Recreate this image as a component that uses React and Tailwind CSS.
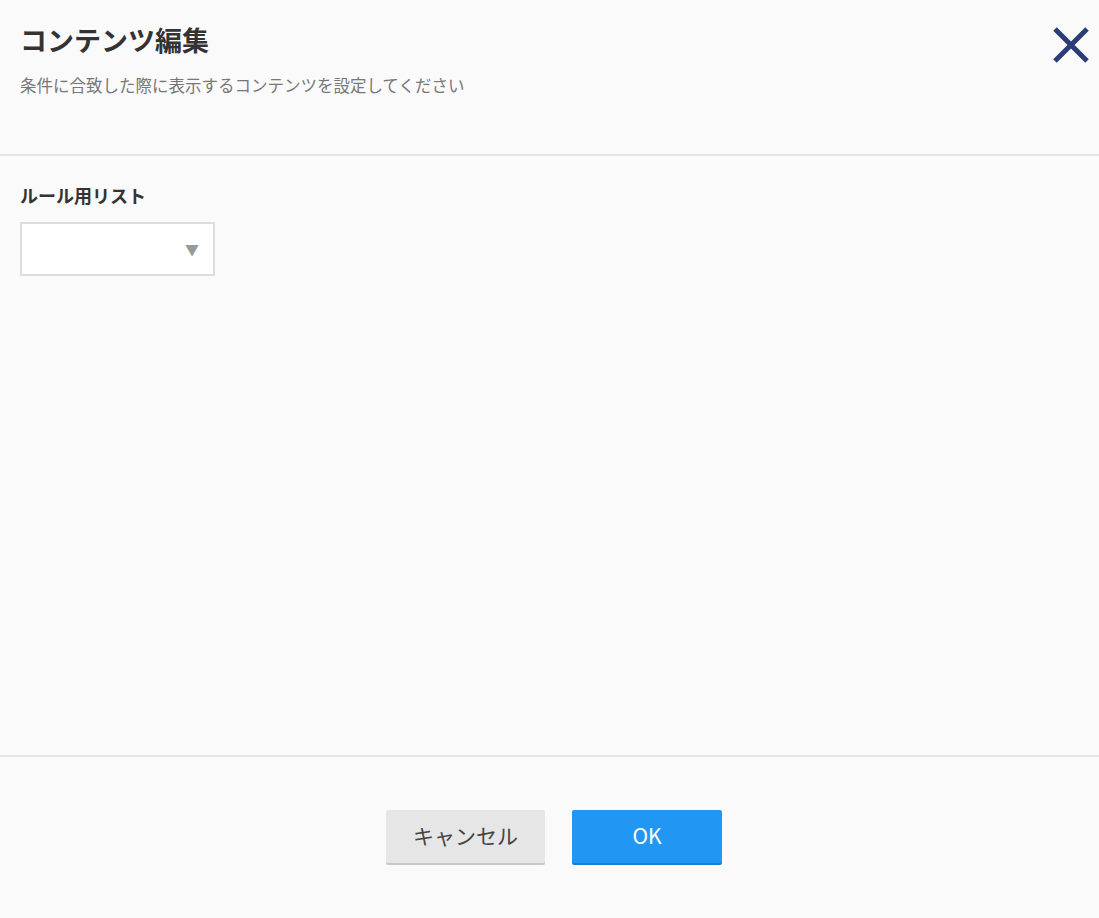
import React from "react";

const font = { fontFamily: '"Noto Sans CJK JP", "Noto Sans", sans-serif' };

const CloseIcon = () => (
  <svg width="36" height="36" viewBox="0 0 36 36" fill="none">
    <path d="M2 2 L34 34 M34 2 L2 34" stroke="#2b3d75" strokeWidth="5" />
  </svg>
);

const App = () => {
  return (
    <div
      className="h-[918px] w-full bg-[#fafafa] flex flex-col text-[#333]"
      style={font}
    >
      {/* header */}
      <div className="h-[154px] pl-5 pr-[10px] pt-[22px] flex justify-between">
        <div>
          <h1 className="text-[27px] leading-[36px] font-bold text-[#333]">
            コンテンツ編集
          </h1>
          <p className="mt-[15px] text-[16.5px] leading-6 text-[#777]">
            条件に合致した際に表示するコンテンツを設定してください
          </p>
        </div>
        <button className="mt-[5px] h-9 w-9">
          <CloseIcon />
        </button>
      </div>
      <div className="h-[2px] bg-[#e5e5e5]" />

      {/* body */}
      <div className="flex-1 px-5 pt-[27px]">
        <div className="text-[18px] leading-6 font-bold text-[#333]">
          ルール用リスト
        </div>
        <div className="mt-[15px] w-[195px] h-[54px] border-2 border-[#dddddd] bg-white flex items-center justify-end pr-[14px]">
          <span className="text-[#999] text-[14px]">▼</span>
        </div>
      </div>
      <div className="h-[2px] bg-[#e5e5e5]" />

      {/* footer */}
      <div className="h-[161px] flex items-center justify-center gap-[27px] pl-[9px] pb-[3px]">
        <button className="w-[159px] h-[53px] rounded-[2px] bg-[#e6e6e6] text-[#444] text-[21px] shadow-[0_2px_0_#c8c8c8]">
          キャンセル
        </button>
        <button className="w-[150px] h-[53px] rounded-[2px] bg-[#2196f3] text-white text-[21px] shadow-[0_2px_0_#1a7fd1]">
          OK
        </button>
      </div>
    </div>
  );
};

export default App;
